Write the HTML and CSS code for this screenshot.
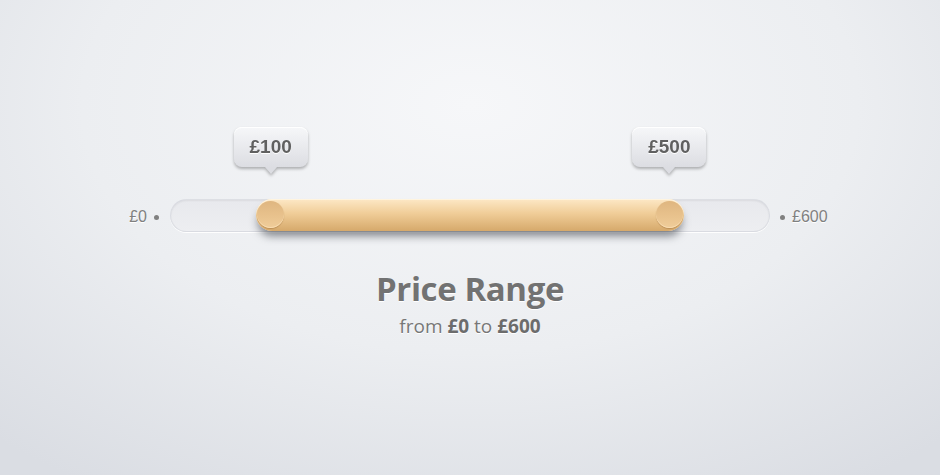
FILE: index.html
```html
<!DOCTYPE html>
<html lang="en">
<head>
  <title>Price Range</title>
  <link rel="stylesheet" href="styles.css">
</head>
<body>

  <div class="price-range">
    <div class="slider">
      <div class="edge edge-min"><span>£0</span><span class="dot"></span></div>
      <div class="track">
        <!-- range 0..600, handles at 100 and 500 -->
        <div class="range" style="left: calc(16.667% - 15px); width: calc(66.667% + 30px);">
          <span class="knob knob-min"></span>
          <span class="knob knob-max"></span>
        </div>
        <div class="tip" style="left: 16.667%;">£100</div>
        <div class="tip" style="left: 83.333%;">£500</div>
      </div>
      <div class="edge edge-max"><span class="dot"></span><span>£600</span></div>
    </div>

    <h1 class="title">Price Range</h1>
    <p class="subtitle">from <b>£0</b> to <b>£600</b></p>
  </div>

</body>
</html>
```

FILE: styles.css
```css
:root {
  --text: #727272;
  --label: #808080;
  --gold-top: #fde8c6;
  --gold-mid: #f0cd98;
  --gold-bottom: #d6a96b;
}

* {
  box-sizing: border-box;
}

body {
  margin: 0;
  height: 475px;
  overflow: hidden;
  font-family: "Liberation Sans", Arial, sans-serif;
  background: radial-gradient(ellipse 75% 95% at 50% 22%, #f6f7f9 0%, #eceef1 55%, #dadde3 100%);
}

.price-range {
  padding-top: 199px;
}

.slider {
  display: grid;
  grid-template-columns: 1fr 600px 1fr;
  align-items: center;
}

.edge {
  display: flex;
  align-items: center;
  gap: 7px;
  padding-top: 3px;
  font-size: 16px;
  color: var(--label);
  text-shadow: 0 1px 0 #fff;
}

.edge-min {
  justify-content: flex-end;
  padding-right: 11px;
}

.edge-max {
  padding-left: 10px;
}

.dot {
  width: 5px;
  height: 5px;
  border-radius: 50%;
  background: var(--label);
}

.track {
  position: relative;
  height: 33px;
  border-radius: 17px;
  background: linear-gradient(#e8e9ed, #edeef1);
  border: 1px solid rgba(150, 155, 170, 0.18);
  box-shadow: inset 0 1px 2px rgba(0, 0, 0, 0.06), 0 1px 0 rgba(255, 255, 255, 0.9);
}

.range {
  position: absolute;
  top: -1px;
  height: 32px;
  border-radius: 16px;
  background: linear-gradient(var(--gold-top), var(--gold-mid) 45%, var(--gold-bottom));
  box-shadow: 0 7px 8px -2px rgba(40, 45, 55, 0.55), inset 0 1px 0 #fff4df;
}

.knob {
  position: absolute;
  top: 2px;
  width: 27px;
  height: 27px;
  border-radius: 50%;
  background: linear-gradient(#dfb680, #e9c38e 60%, #f0cd9a);
  box-shadow: 0 1px 1px rgba(150, 105, 50, 0.45), inset 0 -1px 0 rgba(255, 232, 195, 0.6);
}

.knob-min {
  left: 1px;
}

.knob-max {
  right: 1px;
}

.tip {
  position: absolute;
  bottom: calc(100% + 33px);
  width: 74px;
  height: 40px;
  transform: translateX(-50%);
  display: flex;
  align-items: center;
  justify-content: center;
  border-radius: 8px;
  background: linear-gradient(#f6f7f9, #dcdde2);
  box-shadow: inset 0 1px 0 #fff;
  filter: drop-shadow(0 2px 1.5px rgba(0, 0, 0, 0.28));
  font-size: 19px;
  font-weight: bold;
  color: #606060;
  text-shadow: 0 1px 0 #fff;
}

.tip::after {
  content: "";
  position: absolute;
  top: 100%;
  left: 50%;
  margin-left: -6px;
  border-top: 7px solid #dcdde2;
  border-left: 6px solid transparent;
  border-right: 6px solid transparent;
}

.title {
  margin: 38px 0 0;
  text-align: center;
  font-family: "Open Sans", sans-serif;
  font-size: 33px;
  line-height: 38px;
  font-weight: 700;
  letter-spacing: -0.4px;
  color: var(--text);
  text-shadow: 0 1px 0 #fff;
}

.subtitle {
  margin: 6px 0 0;
  text-align: center;
  font-family: "Open Sans", sans-serif;
  font-size: 19px;
  line-height: 24px;
  color: #777;
  text-shadow: 0 1px 0 #fff;
}

.subtitle b {
  color: #6c6c6c;
}
```
